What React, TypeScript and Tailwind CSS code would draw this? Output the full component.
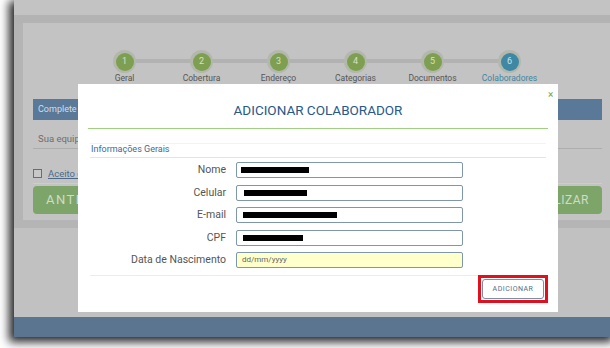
import React from "react";

const steps = [
  { n: "1", label: "Geral", active: false },
  { n: "2", label: "Cobertura", active: false },
  { n: "3", label: "Endereço", active: false },
  { n: "4", label: "Categorias", active: false },
  { n: "5", label: "Documentos", active: false },
  { n: "6", label: "Colaboradores", active: true },
];

const rows = [
  { label: "Nome", bar: "ml-[4px] w-[68px]", yellow: false },
  { label: "Celular", bar: "ml-[7px] w-[63px]", yellow: false },
  { label: "E-mail", bar: "ml-[6px] w-[94px]", yellow: false },
  { label: "CPF", bar: "ml-[6px] w-[60px]", yellow: false },
  { label: "Data de Nascimento", bar: "", yellow: true },
];

export default function App() {
  return (
    <div
      className="relative w-[610px] h-[348px] bg-white overflow-hidden"
      style={{ fontFamily: "Roboto, 'Noto Sans', Arial, sans-serif" }}
    >
      {/* window */}
      <div className="ml-[14px] w-[600px] h-[337px] flex flex-col shadow-[-3px_3px_9px_2px_rgba(0,0,0,0.85)]">
        <div className="h-[15px] bg-[#c3c3c3]" />
        <div className="h-[8px] bg-[#b3b3b3]" />
        <div className="flex h-[197px]">
          <div className="w-[9px] bg-[#b4b4b4]" />
          <div className="flex-1 bg-[#c3c3c3] flex flex-col pl-[10px] pr-[12px]">
            {/* steps */}
            <div className="relative h-[76px] pl-[53px] pt-[27px] flex">
              <div className="absolute left-[92px] top-[36px] w-[385px] h-[4px] bg-[#b2b2b2]" />
              {steps.map((s) => (
                <div key={s.n} className="relative w-[77px] flex flex-col items-center">
                  <div className="w-[23px] h-[23px] rounded-full bg-[#b3b8ad] flex items-center justify-center">
                    <div
                      className={`w-[18px] h-[18px] rounded-full flex items-center justify-center text-[9px] ${
                        s.active ? "bg-[#3f88a3] text-[#cfe2ea]" : "bg-[#7f9f50] text-[#d6e0cc]"
                      }`}
                    >
                      {s.n}
                    </div>
                  </div>
                  <div
                    className={`mt-[0px] text-[8.5px] leading-[11px] ${
                      s.active ? "text-[#3f86a2]" : "text-[#555555]"
                    }`}
                  >
                    {s.label}
                  </div>
                </div>
              ))}
            </div>
            {/* blue header */}
            <div className="h-[21px] bg-[#5a7898] flex items-center pl-[5px] text-[9px] text-[#d5dde6]">
              Complete as informações da sua equipe
            </div>
            <div className="h-[29px] border-b border-[#adadad] pl-[5px] pt-[13px] text-[9.5px] leading-[12px] text-[#6e6e6e]">
              Sua equipe de colaboradores
            </div>
            <div className="h-[35px] border-b border-[#cdcdcd] flex items-start pt-[20px]">
              <div className="w-[9px] h-[9px] border border-[#6c6c6c] bg-[#c8c8c8]" />
              <span className="ml-[6px] text-[9.5px] leading-[10px] text-[#4b6a8b] underline">
                Aceito os termos
              </span>
            </div>
            <div className="mt-[2px] flex justify-between">
              <div className="w-[110px] h-[28px] rounded-[4px] bg-[#7da56a] text-[#cfdcc6] text-[13px] tracking-[1.5px] flex items-center pl-[13px]">
                ANTERIOR
              </div>
              <div className="w-[120px] h-[28px] rounded-[4px] bg-[#7da56a] text-[#cfdcc6] text-[12px] tracking-[0.5px] flex items-center justify-end pr-[13px]">
                FINALIZAR
              </div>
            </div>
          </div>
        </div>
        <div className="h-[8px] bg-[#b5b5b5]" />
        <div className="flex-1 bg-[#c1c1c1]" />
        <div className="h-[20px] bg-[#5b7590]" />
      </div>

      {/* modal */}
      <div className="absolute left-[78px] top-[84px] w-[480px] h-[228px] bg-white flex flex-col">
        <div className="absolute left-[470px] top-[5px] text-[10px] leading-[12px] text-[#6aaa4c]">×</div>
        <div className="mt-[17px] h-[18px] leading-[18px] text-center text-[13.5px] text-[#27598a]">
          ADICIONAR COLABORADOR
        </div>
        <div className="mt-[9px] mx-[10px] h-[1px] bg-[#9fcf80]" />
        <div className="mx-[12px] mt-[14px] border-t border-[#f3f3f3] border-b border-b-[#e4e4e4] h-[15px] flex items-center pl-[1px] pb-[1px] text-[9px] text-[#3b6a98]">
          Informações Gerais
        </div>
        <div className="mt-[4px] flex flex-col gap-y-[6.5px]">
          {rows.map((r) => (
            <div key={r.label} className="flex items-center h-[16px]">
              <div className="w-[148px] text-right text-[10.5px] text-[#555555] leading-[16px]">
                {r.label}
              </div>
              <div
                className={`ml-[10px] w-[227px] h-[16px] rounded-[2px] border border-[#7e97ab] flex items-center ${
                  r.yellow ? "bg-[#ffffcc]" : "bg-white"
                }`}
              >
                {r.yellow ? (
                  <span className="ml-[5px] text-[8px] text-[#666666]">dd/mm/yyyy</span>
                ) : (
                  <div className={`h-[6px] bg-black ${r.bar}`} />
                )}
              </div>
            </div>
          ))}
        </div>
        <div className="mt-[7px] mx-[12px] h-[1px] bg-[#ececec]" />
        <div className="absolute left-[400px] top-[191px] w-[70px] h-[28px] border-[3px] border-[#e0101c] flex items-center justify-center">
          <div className="w-[62px] h-[20px] rounded-[3px] border border-[#7890a8] bg-white flex items-center justify-center text-[7px] tracking-[0.5px] text-[#4f6d8c]">
            ADICIONAR
          </div>
        </div>
      </div>
    </div>
  );
}
